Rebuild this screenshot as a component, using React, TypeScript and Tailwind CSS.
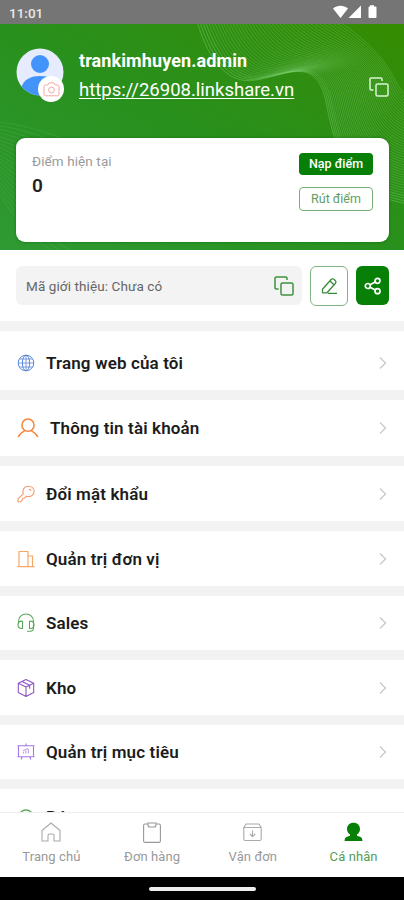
import React from 'react';

const globe = (
  <svg width="18" height="18" viewBox="0 0 18 18" fill="none" stroke="#5b86dc" strokeWidth="1">
    <circle cx="9" cy="9" r="7.8" />
    <ellipse cx="9" cy="9" rx="3.6" ry="7.8" />
    <path d="M1.2 9h15.6M9 1.2v15.6M2.5 5h13M2.5 13h13" strokeWidth="0.8" />
  </svg>
);

const person = (
  <svg width="22" height="20" viewBox="0 0 22 20" fill="none" stroke="#f5863c" strokeWidth="1.5" strokeLinecap="round">
    <circle cx="11" cy="7.2" r="6.1" />
    <path d="M1.4 18.5c1.6-2.5 3.7-4.3 6.3-5.8M14.300 12.700c2.600 1.500 4.700 3.300 6.300 5.800" />
  </svg>
);

const key = (
  <svg width="18" height="18" viewBox="0 0 18 18" fill="none" stroke="#f79a6c" strokeWidth="1.1" strokeLinejoin="round">
    <path d="M11.3 1.2c3.3 0 5.8 2.2 5.8 5.2s-2.5 5.2-5.6 5.2c-.7 0-1.3-.1-1.9-.3L7.500 13l-1.800.3-.6 2-1.400 1.500H1v-3l5.200-5C5 4.600 7.600 1.200 11.300 1.200z" />
    <path d="M11.800 4.200c1.200 0 2.100.8 2.100 1.900" />
  </svg>
);

const building = (
  <svg width="18" height="18" viewBox="0 0 18 18" fill="none" stroke="#f7a868" strokeWidth="1.2">
    <path d="M.4 16.600h17.200M2 16.500V1.500h9v15M11 6h4.500v10.500" />
  </svg>
);

const headset = (
  <svg width="18" height="20" viewBox="0 0 18 20" fill="none" stroke="#5aa65a" strokeWidth="1.1" strokeLinecap="round">
    <path d="M1.500 10V8.500C1.500 4 4.700 1 9 1s7.500 3 7.500 7.500V15c0 2-1.500 3.200-3.500 3.300h-2.500" />
    <path d="M5.500 8.200v7.200c-2.800.4-4.500-.8-4.500-3.600s1.700-4 4.500-3.600zM12.500 8.200v7.200c2.800.4 4.500-.8 4.500-3.600s-1.700-4-4.500-3.600z" />
  </svg>
);

const box = (
  <svg width="18" height="20" viewBox="0 0 18 20" fill="none" stroke="#8f55c4" strokeWidth="1.1" strokeLinejoin="round">
    <path d="M9 1.500l7.700 3.700v9.300L9 18.500l-7.700-4V5.200zM1.300 5.200L9 9l7.700-3.800M9 9v9.500M5 3.400l7.700 3.800v3.500" />
  </svg>
);

const board = (
  <svg width="18" height="18" viewBox="0 0 18 18" fill="none" stroke="#a477e6" strokeWidth="1.1">
    <path d="M1.500 2.800h15v11h-15zM.5 2.800h17M.5 13.800h17M9 .6v2.200M5 14l-.8 2.500M13 14l.8 2.500" />
    <path d="M6.300 10.500V8.800M8.800 10.500V7.600M11.300 10.500V6M6 7.800l5-2.300" strokeWidth="0.8" />
  </svg>
);

const menu = [
  { label: 'Trang web của tôi', icon: globe, row: 'h-[59px] pt-1' },
  { label: 'Thông tin tài khoản', icon: person, row: 'h-14' },
  { label: 'Đổi mật khẩu', icon: key, row: 'h-[55px]' },
  { label: 'Quản trị đơn vị', icon: building, row: 'h-[55px]' },
  { label: 'Sales', icon: headset, row: 'h-[54px]' },
  { label: 'Kho', icon: box, row: 'h-[55px]' },
  { label: 'Quản trị mục tiêu', icon: board, row: 'h-[54px]' },
];

// blends two cubic point lists into a fan of thin lines
const fan = (a: number[], b: number[], count: number) =>
  Array.from({ length: count }, (_, i) => {
    const t = i / (count - 1);
    const p = a.map((v, k) => (v + (b[k] - v) * t).toFixed(1));
    return `M${p[0]} ${p[1]}C${p.slice(2).join(' ')}`;
  });

const waves = fan(
  [196, -6, 206, 30, 225, 62, 256, 56, 290, 50, 316, 32, 326, 78, 334, 118, 345, 172, 410, 180],
  [300, -40, 320, -10, 340, -4, 356, 10, 374, 24, 386, 38, 394, 54, 398, 62, 402, 68, 410, 76],
  42,
);

const leftWaves = fan(
  [-6, 98, 30, 100, 50, 112, 90, 122],
  [-6, 160, 10, 190, 30, 215, 70, 240],
  20,
);

const CopyIcon = ({ color }: { color: string }) => (
  <svg width="20" height="20" viewBox="0 0 20 20" fill="none" stroke={color} strokeWidth="1.5" strokeLinejoin="round">
    <rect x="7" y="7" width="12" height="12" rx="1.5" />
    <path d="M4.500 13H2.200A1.200 1.200 0 0 1 1 11.800V2.200A1.200 1.200 0 0 1 2.200 1h9.600A1.200 1.200 0 0 1 13 2.200V4" />
  </svg>
);

const StatusBar = () => (
  <div className="flex h-6 shrink-0 items-center justify-between bg-[#757575] pr-[26px] pl-[9px]">
    <span className="pt-0.5 text-[13.5px] font-medium text-[#e8e8e8]">11:01</span>
    <svg width="45" height="14" viewBox="0 0 45 14" fill="#fff">
      <path d="M0 3.500C4.500-.2 10.500-.2 15 3.500L7.500 13z" />
      <path d="M28 .6V13H15.600z" />
      <path d="M37 1.500V.3h4v1.200h1.500q1 0 1 1V12q0 1-1 1h-6q-1 0-1-1V2.500q0-1 1-1z" />
    </svg>
  </div>
);

const Header = () => (
  <div className="relative h-[226px] shrink-0 overflow-hidden bg-linear-to-tr from-[#2f9a33] via-[#28901c] to-[#358c00] pr-[15px] pl-4">
    <svg className="absolute top-0 left-0" width="404" height="226" fill="none" stroke="#8fdd85">
      {waves.map((d, i) => (
        <path key={d} d={d} strokeWidth="0.8" opacity={i < 4 ? 0.45 : 0.32} />
      ))}
      {leftWaves.map((d) => (
        <path key={d} d={d} strokeWidth="0.7" opacity="0.2" />
      ))}
    </svg>
    <div className="relative flex pt-6">
      <div className="relative h-[54px] w-12 shrink-0">
        <svg width="48" height="48" viewBox="0 0 48 48">
          <defs>
            <clipPath id="face">
              <circle cx="24" cy="24" r="23.5" />
            </clipPath>
          </defs>
          <circle cx="24" cy="24" r="23.5" fill="#e6ebfd" />
          <g clipPath="url(#face)" fill="#4294fb">
            <circle cx="24" cy="16" r="9" />
            <path d="M5 40C8 31 15 28 24 28s16 3 19 12v10H5z" />
          </g>
        </svg>
        <span className="absolute top-7 left-[22px] flex size-[26px] items-center justify-center rounded-full bg-white">
          <svg width="17" height="15" viewBox="0 0 17 15" fill="none" stroke="#f3a9a2" strokeWidth="1">
            <path d="M2.500 3h2.200L6 .9h5L12.300 3h2.200q1.500 0 1.500 1.500v7.800q0 1.500-1.500 1.500h-12q-1.500 0-1.500-1.500V4.500Q1 3 2.500 3z" />
            <circle cx="8.500" cy="8" r="2.900" />
          </svg>
        </span>
      </div>
      <div className="ml-[15px] text-white">
        <div className="text-[18px] leading-[25px] font-bold tracking-[0.1px]">trankimhuyen.admin</div>
        <div className="mt-[5px] text-[18.5px] leading-6 underline underline-offset-2">https://26908.linkshare.vn</div>
      </div>
      <div className="ml-auto pt-[29px]">
        <CopyIcon color="#d9f5d5" />
      </div>
    </div>
    <div className="relative mt-9 flex h-[104px] justify-between rounded-[9px] bg-white pt-[15px] pr-4 pl-4 shadow-[0_0_3px_#146b10]">
      <div>
        <div className="text-[13.5px] leading-[16px] tracking-[0.1px] text-[#9a9a9a]">Điểm hiện tại</div>
        <div className="mt-[5px] text-[19px] leading-6 font-semibold text-[#222]">0</div>
      </div>
      <div className="flex w-[74px] flex-col gap-3 text-[12.5px]">
        <button className="h-[22px] rounded bg-[#088008] font-medium text-white">Nạp điểm</button>
        <button className="h-6 rounded border border-[#78ad78] text-[#629c62]">Rút điểm</button>
      </div>
    </div>
  </div>
);

const ReferralRow = () => (
  <div className="flex h-[71px] shrink-0 items-start pt-4 pr-[15px] pl-4">
    <div className="flex h-[39px] w-[286px] items-center justify-between rounded-md bg-[#f3f3f3] pr-2 pl-2.5">
      <span className="pt-0.5 text-[13.5px] tracking-[0.1px] text-[#666]">Mã giới thiệu: Chưa có</span>
      <CopyIcon color="#3f923f" />
    </div>
    <div className="ml-2 flex h-10 w-[38px] items-center justify-center rounded-md border border-[#82b382]">
      <svg width="17" height="18" viewBox="0 0 17 18" fill="none" stroke="#388c38" strokeWidth="1.3" strokeLinejoin="round">
        <path d="M1.500 12.200L10.300 2.300Q11.500 1.300 12.900 2.300l1.500 1.400q1.200 1.200.1 2.500L6 15.800H1.500zM9 4l4 3.800M7 16.400h9" />
      </svg>
    </div>
    <div className="ml-2 flex h-[39px] flex-1 items-center justify-center rounded-md bg-[#088008]">
      <svg width="18" height="18" viewBox="0 0 18 18" fill="none" stroke="#fff" strokeWidth="1.7">
        <circle cx="3.800" cy="9" r="2.500" />
        <circle cx="13.500" cy="3.800" r="2.500" />
        <circle cx="13.500" cy="14.200" r="2.500" />
        <path d="M6 7.800l5.300-2.900M6 10.200l5.300 2.900" />
      </svg>
    </div>
  </div>
);

const BottomNav = () => (
  <div className="h-[65px] shrink-0 border-t border-[#eee] bg-white">
    <div className="ml-px grid grid-cols-4 pt-[9px] text-center text-[13px] leading-[18px] tracking-[0.1px] text-[#999]">
      <div className="flex flex-col items-center gap-1.5">
        <svg width="20" height="20" viewBox="0 0 20 20" fill="none" stroke="#aaa" strokeWidth="1.1" strokeLinejoin="round">
          <path d="M1 8.500L10 1l9 7.500V19h-6v-5.500q0-1.500-1.500-1.500h-3Q7 12 7 13.500V19H1z" />
        </svg>
        <span>Trang chủ</span>
      </div>
      <div className="flex flex-col items-center gap-1.5">
        <svg width="18" height="21" viewBox="0 0 18 21" className="-mb-px" fill="none" stroke="#999" strokeWidth="1.1">
          <rect x=".6" y="2" width="16.8" height="18.4" rx="1.5" />
          <path d="M5 1h8v2q0 2-2 2H7Q5 5 5 3z" fill="#fff" />
        </svg>
        <span>Đơn hàng</span>
      </div>
      <div className="flex flex-col items-center gap-1.5">
        <svg width="19" height="20" viewBox="0 0 19 20" fill="none" stroke="#aaa" strokeWidth="1.1" strokeLinejoin="round">
          <path d="M.8 5.500L3 2h13l2.200 3.500V17q0 1.500-1.500 1.500H2.300Q.8 18.500.8 17zM.8 5.500h17.400M9.500 8.500v6M6.800 12l2.700 2.600 2.700-2.600" />
        </svg>
        <span>Vận đơn</span>
      </div>
      <div className="flex flex-col items-center gap-1.5 text-[#559c55]">
        <svg width="19" height="20" viewBox="0 0 19 20" fill="#088008">
          <path d="M9.500.8c4 0 6.500 2.700 6.500 6.200 0 2.500-1.200 4.400-3 5.500v1.200l3.700 1.300q1.800.8 1.800 4H.5q0-3.200 1.800-4L6 13.700v-1.200C4.200 11.400 3 9.500 3 7 3 3.500 5.500.8 9.500.8z" />
        </svg>
        <span>Cá nhân</span>
      </div>
    </div>
  </div>
);

const App = () => {
  return (
    <div className="flex h-[900px] w-[404px] flex-col overflow-hidden bg-white font-['Roboto',sans-serif]">
      <StatusBar />
      <Header />
      <ReferralRow />
      <div className="min-h-0 flex-1 overflow-hidden">
        {menu.map((item) => (
          <div key={item.label} className="border-t-10 border-[#f2f2f2]">
            <div className={`flex items-center pr-4 pl-[17px] ${item.row}`}>
              {item.icon}
              <span className="ml-[11px] pt-0.5 text-[17px] font-semibold tracking-[0.13px] text-[#1c1c1c]">{item.label}</span>
              <svg className="ml-auto" width="10" height="14" viewBox="0 0 10 14" fill="none" stroke="#c9c9c9" strokeWidth="1.3">
                <path d="M2 1.500L7.500 7 2 12.500" />
              </svg>
            </div>
          </div>
        ))}
        <div className="border-t-10 border-[#f2f2f2]">
          <div className="flex pt-5 pl-[18px]">
            <svg width="16" height="16" viewBox="0 0 16 16" fill="none" stroke="#5aa65a" strokeWidth="1.3">
              <circle cx="8" cy="8" r="7" />
            </svg>
            <span className="-mt-0.5 ml-3 text-[17px] leading-5 font-semibold text-[#1c1c1c]">Bá</span>
          </div>
        </div>
      </div>
      <BottomNav />
      <div className="flex h-[23px] shrink-0 items-center justify-center bg-black">
        <div className="h-1 w-[107px] rounded-full bg-[#eee]" />
      </div>
    </div>
  );
};

export default App;
